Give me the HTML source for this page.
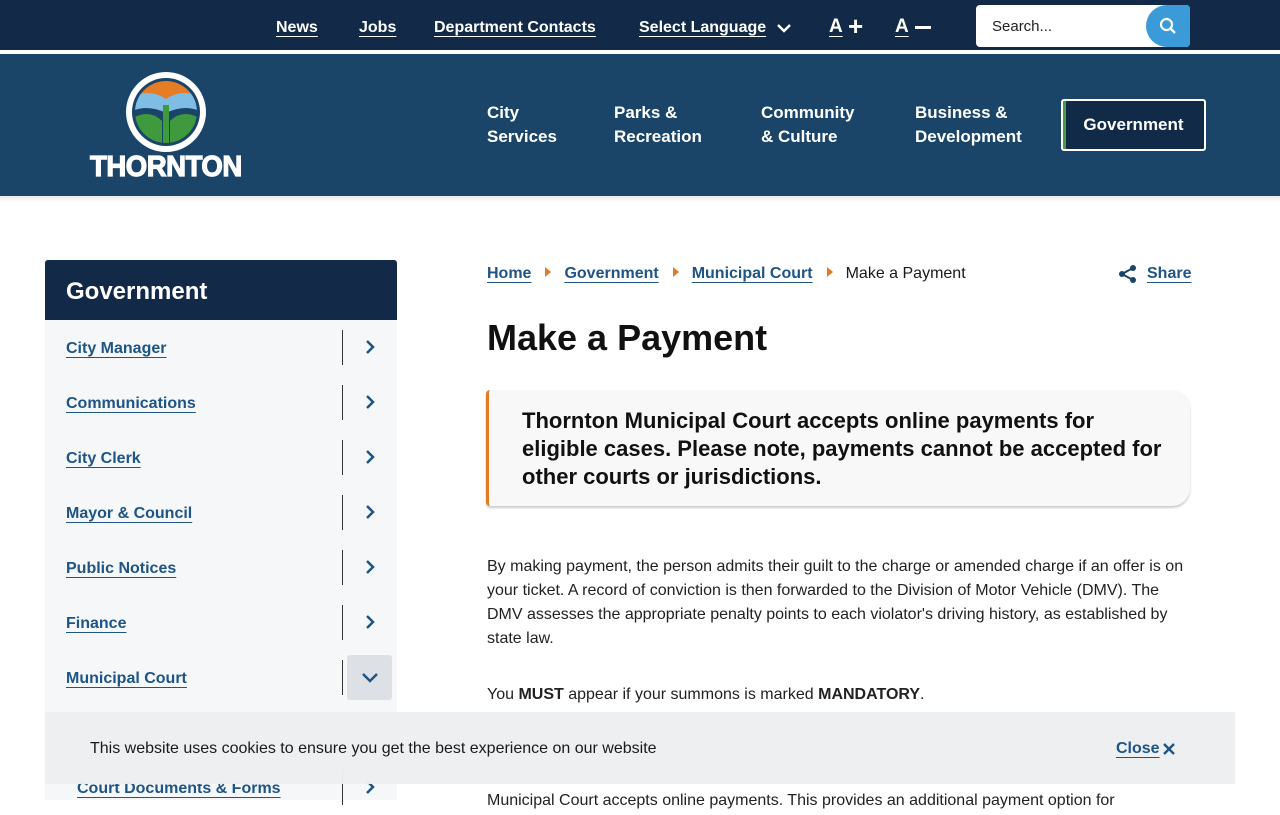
<!DOCTYPE html>
<html><head><meta charset="utf-8"><style>
*{box-sizing:border-box;margin:0;padding:0}
body{width:1280px;height:800px;overflow:hidden;background:#fff;font-family:"Liberation Sans",sans-serif;color:#1a1a1a;position:relative}
.top{position:absolute;left:0;top:0;width:1280px;height:52px;background:#122a47;border-bottom:2px solid #fff}
.top a{position:absolute;top:19px;color:#fff;font-weight:bold;font-size:16px;text-decoration:underline;text-underline-offset:4px}
.search{position:absolute;left:976px;top:5px;width:214px;height:42px;background:#fff;border-radius:4px}
.search span{position:absolute;left:16px;top:13px;font-size:15px;color:#222}
.search .btn{position:absolute;right:0;top:0;width:44px;height:42px;background:#3a9bd8;border-radius:22px 4px 4px 22px}
.hdr{position:absolute;left:0;top:54px;width:1280px;height:142px;background:#1a4468}
.nav{position:absolute;color:#fff;font-weight:bold;font-size:17px;line-height:24px}
.gov{position:absolute;left:1061px;top:99px;width:145px;height:52px;border:2px solid #fff;border-radius:3px;background:#112a47;color:#fff;font-weight:bold;font-size:17px;text-align:center;line-height:48px;box-shadow:inset 3px 0 0 #4a9a4a}
.side{position:absolute;left:45px;top:260px;width:352px;height:540px;background:#f6f7f8}
.side h2{background:#122a47;color:#fff;font-size:24px;height:60px;line-height:64px;padding-left:21px;border-radius:3px 3px 0 0}
.item{position:absolute;left:0;width:352px;height:55px}
.item a{position:absolute;left:21px;top:20px;color:#1e5486;font-weight:bold;font-size:16px;text-decoration:underline;text-underline-offset:4px}
.item .sep{position:absolute;left:297px;top:10px;width:1px;height:35px;background:#333}
.item svg{position:absolute;left:318px;top:19px}
.main{position:absolute;left:487px}
.bc a{color:#1e5486;font-weight:bold;text-decoration:underline;text-underline-offset:4px}
.tri{display:inline-block;width:0;height:0;border-left:6px solid #e07b22;border-top:5px solid transparent;border-bottom:5px solid transparent;margin:0 13px 1px 14px}
p.b{font-size:16px;line-height:24px;color:#222}
.cookie{position:absolute;left:45px;top:712px;width:1190px;height:72px;background:rgba(236,238,240,.97)}
</style></head><body>
<div class="top">
<a style="left:276px">News</a><a style="left:359px">Jobs</a><a style="left:434px">Department Contacts</a><a style="left:639px">Select Language</a>
<svg style="position:absolute;left:776px;top:22px" width="16" height="12"><path d="M2 3l6 6 6-6" stroke="#fff" stroke-width="2.5" fill="none"/></svg>
<a style="left:829px;font-size:19px;top:16px">A</a><span style="position:absolute;left:848px;top:11px;color:#fff;font-size:26px;font-weight:bold">+</span>
<a style="left:895px;font-size:19px;top:16px">A</a><span style="position:absolute;left:915px;top:26px;width:16px;height:3px;background:#fff"></span>
<div class="search"><span>Search...</span><div class="btn"><svg style="position:absolute;left:13px;top:12px" width="18" height="18"><circle cx="7.5" cy="7.5" r="5.5" stroke="#fff" stroke-width="2.2" fill="none"/><path d="M11.5 11.5l4.5 4.5" stroke="#fff" stroke-width="2.4"/></svg></div></div>
</div>
<div class="hdr"></div>
<svg style="position:absolute;left:123px;top:69px" width="86" height="86" viewBox="0 0 86 86">
<circle cx="43" cy="43" r="40" fill="#fff"/><circle cx="43" cy="43" r="34" fill="#1a4468"/>
<clipPath id="c"><circle cx="43" cy="43" r="31"/></clipPath>
<g clip-path="url(#c)"><rect x="0" y="0" width="86" height="35" fill="#e57c26"/>
<path d="M5 30q20-12 38 0q18-12 38 0v14q-18-10-38 0q-20-10-38 0z" fill="#7fbde5"/>
<path d="M5 52q20-14 34 0v30h-34z" fill="#3f9a3d"/><path d="M81 52q-20-14-34 0v30h34z" fill="#3f9a3d"/>
<rect x="40" y="36" width="6" height="50" fill="#3f9a3d"/></g></svg>
<div style="position:absolute;left:90px;top:151px;color:#fff;font-weight:bold;font-size:29px;letter-spacing:-0.5px;-webkit-text-stroke:1.2px #fff;transform:scaleX(.95);transform-origin:left">THORNTON</div>
<div class="nav" style="left:487px;top:101px">City<br>Services</div>
<div class="nav" style="left:614px;top:101px">Parks &amp;<br>Recreation</div>
<div class="nav" style="left:761px;top:101px">Community<br>&amp; Culture</div>
<div class="nav" style="left:915px;top:101px">Business &amp;<br>Development</div>
<div class="gov">Government</div>
<div style="position:absolute;left:0;top:196px;width:1280px;height:6px;background:linear-gradient(#e8e8e8,#fff)"></div>

<div class="side"><h2>Government</h2>
<div class="item" style="top:60px"><a>City Manager</a><div class="sep"></div><svg width="14" height="16"><path d="M4 2l6 6-6 6" stroke="#1e5486" stroke-width="2.5" fill="none"/></svg></div>
<div class="item" style="top:115px"><a>Communications</a><div class="sep"></div><svg width="14" height="16"><path d="M4 2l6 6-6 6" stroke="#1e5486" stroke-width="2.5" fill="none"/></svg></div>
<div class="item" style="top:170px"><a>City Clerk</a><div class="sep"></div><svg width="14" height="16"><path d="M4 2l6 6-6 6" stroke="#1e5486" stroke-width="2.5" fill="none"/></svg></div>
<div class="item" style="top:225px"><a>Mayor &amp; Council</a><div class="sep"></div><svg width="14" height="16"><path d="M4 2l6 6-6 6" stroke="#1e5486" stroke-width="2.5" fill="none"/></svg></div>
<div class="item" style="top:280px"><a>Public Notices</a><div class="sep"></div><svg width="14" height="16"><path d="M4 2l6 6-6 6" stroke="#1e5486" stroke-width="2.5" fill="none"/></svg></div>
<div class="item" style="top:335px"><a>Finance</a><div class="sep"></div><svg width="14" height="16"><path d="M4 2l6 6-6 6" stroke="#1e5486" stroke-width="2.5" fill="none"/></svg></div>
<div class="item" style="top:390px"><a>Municipal Court</a><div class="sep"></div><div style="position:absolute;left:302px;top:5px;width:45px;height:45px;background:#dde1e6;border-radius:3px"></div><svg style="left:316px;top:22px" width="18" height="12"><path d="M2 2l7 7 7-7" stroke="#1e5486" stroke-width="2.5" fill="none"/></svg></div>
<div class="item" style="top:500px"><a style="left:32px;top:20px">Court Documents &amp; Forms</a><div class="sep"></div><svg width="14" height="16"><path d="M4 2l6 6-6 6" stroke="#1e5486" stroke-width="2.5" fill="none"/></svg></div>
</div>

<div class="main bc" style="top:265px;font-size:16px"><a>Home</a><span class="tri"></span><a>Government</a><span class="tri"></span><a>Municipal Court</a><span class="tri"></span><span>Make a Payment</span></div>
<svg style="position:absolute;left:1118px;top:264px" width="20" height="20"><circle cx="15" cy="4" r="3" fill="#1a4468"/><circle cx="4" cy="10" r="3" fill="#1a4468"/><circle cx="15" cy="16" r="3" fill="#1a4468"/><path d="M15 4L4 10l11 6" stroke="#1a4468" stroke-width="2" fill="none"/></svg>
<a style="position:absolute;left:1147px;top:265px;color:#1e5486;font-weight:bold;font-size:16px;text-decoration:underline;text-underline-offset:4px">Share</a>
<h1 class="main" style="top:317px;font-size:36px;font-weight:bold;color:#111">Make a Payment</h1>
<div style="position:absolute;left:486px;top:390px;width:704px;height:116px;background:#f8f8f8;border-left:3px solid #e07b22;border-radius:4px 18px 18px 4px;box-shadow:0 2px 2px #ccc"></div>
<div style="position:absolute;left:522px;top:407px;width:650px;font-size:22px;line-height:28px;font-weight:bold;color:#111">Thornton Municipal Court accepts online payments for eligible cases. Please note, payments cannot be accepted for other courts or jurisdictions.</div>
<p class="b main" style="top:555px;width:702px">By making payment, the person admits their guilt to the charge or amended charge if an offer is on your ticket. A record of conviction is then forwarded to the Division of Motor Vehicle (DMV). The DMV assesses the appropriate penalty points to each violator's driving history, as established by state law.</p>
<p class="b main" style="top:683px">You <b>MUST</b> appear if your summons is marked <b>MANDATORY</b>.</p>
<p class="b main" style="top:789px">Municipal Court accepts online payments. This provides an additional payment option for</p>
<div class="cookie"><span style="position:absolute;left:45px;top:28px;font-size:16px">This website uses cookies to ensure you get the best experience on our website</span>
<a style="position:absolute;left:1071px;top:28px;color:#1e5486;font-weight:bold;font-size:16px;text-decoration:underline;text-underline-offset:4px">Close</a>
<svg style="position:absolute;left:1117px;top:30px" width="14" height="14"><path d="M2 2l10 10M12 2L2 12" stroke="#1e5486" stroke-width="2.4"/></svg></div>
</body></html>
